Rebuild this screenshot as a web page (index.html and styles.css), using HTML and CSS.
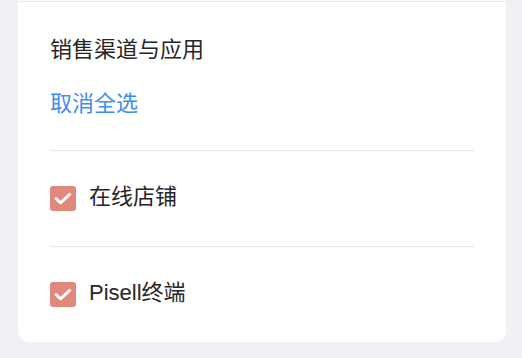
FILE: index.html
```html
<!DOCTYPE html>
<html lang="zh">
<head>
<meta charset="utf-8">
<link rel="stylesheet" href="styles.css">
</head>
<body>
<div class="card">
  <div class="top-sep"></div>
  <div class="header">
    <div class="title">销售渠道与应用</div>
    <div class="link">取消全选</div>
  </div>
  <div class="list">
    <div class="row">
      <span class="check"><svg viewBox="0 0 26 25" width="26" height="25"><path d="M6 12.6 L10.6 16.8 L19.6 8.4" fill="none" stroke="#fff" stroke-width="3" stroke-linecap="round" stroke-linejoin="round"/></svg></span>
      <span class="label">在线店铺</span>
    </div>
    <div class="row">
      <span class="check"><svg viewBox="0 0 26 25" width="26" height="25"><path d="M6 12.6 L10.6 16.8 L19.6 8.4" fill="none" stroke="#fff" stroke-width="3" stroke-linecap="round" stroke-linejoin="round"/></svg></span>
      <span class="label">Pisell终端</span>
    </div>
  </div>
</div>
</body>
</html>
```

FILE: styles.css
```css
html, body {
  margin: 0;
  padding: 0;
  background: #f0f1f5;
}
body {
  padding: 0 16px 16px 18px;
  font-family: "Liberation Sans", "Noto Sans CJK SC", sans-serif;
  color: #262626;
}
.card {
  background: #fff;
  border-radius: 0 0 12px 12px;
  padding: 1px 32px 0 32px;
}
.top-sep {
  height: 0;
  border-top: 1px solid #e8e8eb;
  margin: 0 -32px;
}
.header {
  padding: 33px 0 31px 0;
  border-bottom: 1px solid #e8e8eb;
}
.title {
  font-size: 22px;
  line-height: 30px;
  color: #262626;
}
.link {
  margin-top: 24px;
  font-size: 22px;
  line-height: 30px;
  color: #3f8cf0;
}
.row {
  height: 95px;
  display: flex;
  align-items: center;
  gap: 13px;
}
.row + .row {
  border-top: 1px solid #e8e8eb;
}
.check {
  width: 26px;
  height: 25px;
  border-radius: 3px;
  background: #e0887e;
  display: flex;
}
.label {
  font-size: 22px;
  line-height: 30px;
  padding-bottom: 4px;
  color: #262626;
}
```
